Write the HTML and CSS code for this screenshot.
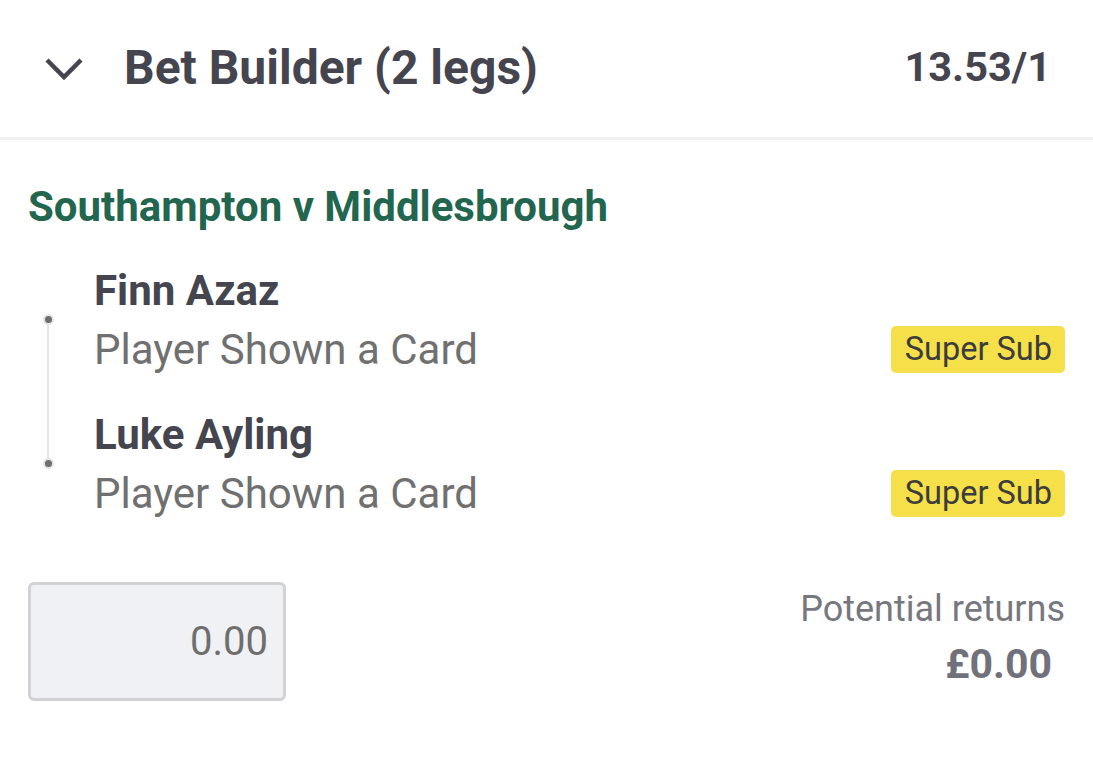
FILE: index.html
```html
<!DOCTYPE html>
<html lang="en">
<head>
<meta charset="utf-8">
<title>Bet Builder</title>
<link rel="stylesheet" href="styles.css">
</head>
<body>
<div class="slip">
  <header class="slip-header">
    <svg class="chevron" width="40" height="26" viewBox="0 0 40 26" aria-hidden="true">
      <polyline points="3,4 20,21 37,4" fill="none" stroke="#45454f" stroke-width="4.5"/>
    </svg>
    <h1 class="slip-title">Bet Builder (2 legs)</h1>
    <span class="slip-odds">13.53/1</span>
  </header>
  <section class="slip-body">
    <h2 class="event">Southampton v Middlesbrough</h2>
    <div class="legs">
      <div class="leg">
        <div class="leg-name">Finn Azaz</div>
        <div class="leg-row">
          <span class="leg-market">Player Shown a Card</span>
          <span class="badge">Super Sub</span>
        </div>
      </div>
      <div class="leg">
        <div class="leg-name">Luke Ayling</div>
        <div class="leg-row">
          <span class="leg-market">Player Shown a Card</span>
          <span class="badge">Super Sub</span>
        </div>
      </div>
      <span class="timeline"></span>
      <span class="dot dot-1"></span>
      <span class="dot dot-2"></span>
    </div>
    <div class="stake-row">
      <div class="stake-input">0.00</div>
      <div class="returns">
        <div class="returns-label">Potential returns</div>
        <div class="returns-amount">£0.00</div>
      </div>
    </div>
  </section>
</div>
</body>
</html>
```
FILE: styles.css
```css
* { box-sizing: border-box; }
html, body {
  margin: 0;
  padding: 0;
  background: #ffffff;
  font-family: Roboto, "Liberation Sans", sans-serif;
}
.slip { width: 1093px; }

.slip-header {
  display: flex;
  align-items: center;
  height: 140px;
  padding: 0 42px 0 44px;
  border-bottom: 3px solid #f1f1f3;
}
.chevron { display: block; margin-right: 40px; margin-top: 0; }
.slip-title {
  margin: 0;
  flex: 1;
  font-size: 48px;
  font-weight: 700;
  color: #45454f;
  line-height: 56px;
  margin-top: -2px;
}
.slip-odds {
  font-size: 41.5px;
  font-weight: 700;
  color: #45454f;
  margin-top: -4px;
}

.slip-body { padding: 43px 28px 0 28px; }
.event {
  margin: 0;
  font-size: 42px;
  line-height: 48px;
  font-weight: 700;
  color: #23664f;
}

.legs {
  position: relative;
  margin-top: 32px;
  padding-left: 66px;
}
.leg + .leg { margin-top: 28px; }
.leg-name {
  font-size: 42px;
  line-height: 56px;
  font-weight: 700;
  color: #45454f;
}
.leg-row {
  display: flex;
  align-items: center;
  justify-content: space-between;
  height: 60px;
}
.leg-market {
  font-size: 42px;
  color: #707070;
}
.badge {
  display: inline-block;
  height: 47px;
  line-height: 47px;
  padding: 0 13px 0 14px;
  background: #f6e04a;
  border-radius: 5px;
  font-size: 32.5px;
  color: #3c3c3c;
}
.timeline {
  position: absolute;
  left: 19px;
  top: 56px;
  width: 2px;
  height: 145px;
  background: #e6e6ea;
}
.dot {
  position: absolute;
  left: 15px;
  width: 11px;
  height: 11px;
  border-radius: 50%;
  background: #6e6e6e;
  border: 2px solid #e4e4e8;
}
.dot-1 { top: 51px; }
.dot-2 { top: 195px; }

.stake-row {
  display: flex;
  justify-content: space-between;
  align-items: flex-start;
  margin-top: 59px;
}
.stake-input {
  width: 258px;
  height: 119px;
  background: #f0f1f5;
  border: 3px solid #d2d2d4;
  border-radius: 6px;
  display: flex;
  align-items: center;
  justify-content: flex-end;
  padding-right: 15px;
  font-size: 40px;
  color: #6e6e6e;
}
.returns { text-align: right; padding-top: 5px; }
.returns-label {
  font-size: 36px;
  line-height: 44px;
  color: #77777f;
}
.returns-amount {
  font-size: 41px;
  line-height: 66px;
  font-weight: 700;
  color: #71717b;
  padding-right: 13px;
}
```
